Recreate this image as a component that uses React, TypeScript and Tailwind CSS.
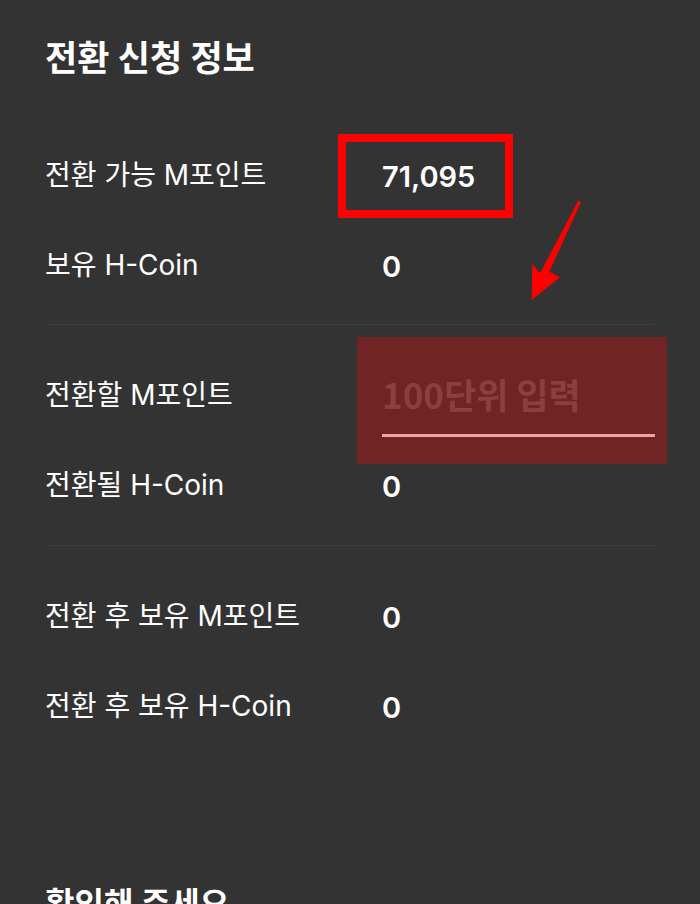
const font = { fontFamily: 'Inter, "Noto Sans CJK KR", sans-serif' };

function Row({ label, value, children }: { label: string; value?: string; children?: React.ReactNode }) {
  return (
    <div className="relative flex h-[90px] items-center">
      <div className="w-[337px] shrink-0 text-[28px] text-white">{label}</div>
      {value !== undefined && <div className="pt-[3px] text-[29px] font-semibold text-white">{value}</div>}
      {children}
    </div>
  );
}

export default function App() {
  return (
    <div className="relative min-h-[904px] overflow-hidden bg-[#333333] px-[45px] pt-[37px]" style={font}>
      <h2 className="text-[35px] font-bold leading-[42px] text-white">전환 신청 정보</h2>

      <div className="mt-[51px]">
        <Row label="전환 가능 M포인트" value="71,095">
          {/* annotation box */}
          <div className="pointer-events-none absolute left-[293px] top-[4px] h-[84px] w-[175px] border-[8px] border-[#ff0000]" />
        </Row>
        <Row label="보유 H-Coin" value="0" />
      </div>

      <div className="mt-[14px] h-px bg-[#3d3d3d]" />

      <div className="mt-[25px]">
        <Row label="전환할 M포인트">
          <input
            type="text"
            placeholder="100단위 입력"
            className="h-[83px] min-w-0 flex-1 border-b-[3px] border-[#e8e8e8] bg-transparent text-[35px] font-bold text-white outline-none placeholder:text-[#5a5a5a]"
            style={{ fontFamily: '"Noto Sans CJK KR", sans-serif' }}
          />
          {/* annotation overlay */}
          <div className="pointer-events-none absolute left-[312px] top-[-13px] h-[127px] w-[310px] bg-[#ff0000]/30" />
        </Row>
        <Row label="전환될 H-Coin" value="0" />
      </div>

      <div className="mt-[15px] h-px bg-[#3d3d3d]" />

      <div className="mt-[25px]">
        <Row label="전환 후 보유 M포인트" value="0" />
        <Row label="전환 후 보유 H-Coin" value="0" />
      </div>

      <h3 className="mt-[134px] text-[32px] font-bold leading-[38px] text-white">확인해 주세요</h3>

      {/* annotation arrow */}
      <svg className="pointer-events-none absolute left-[500px] top-[190px]" width="100" height="120" viewBox="0 0 100 120">
        <polygon points="31.7,110 32.3,74 40,83.3 78.3,10.7 81,12 49.3,81.7 60,87.3" fill="#ff0000" />
      </svg>
    </div>
  );
}
